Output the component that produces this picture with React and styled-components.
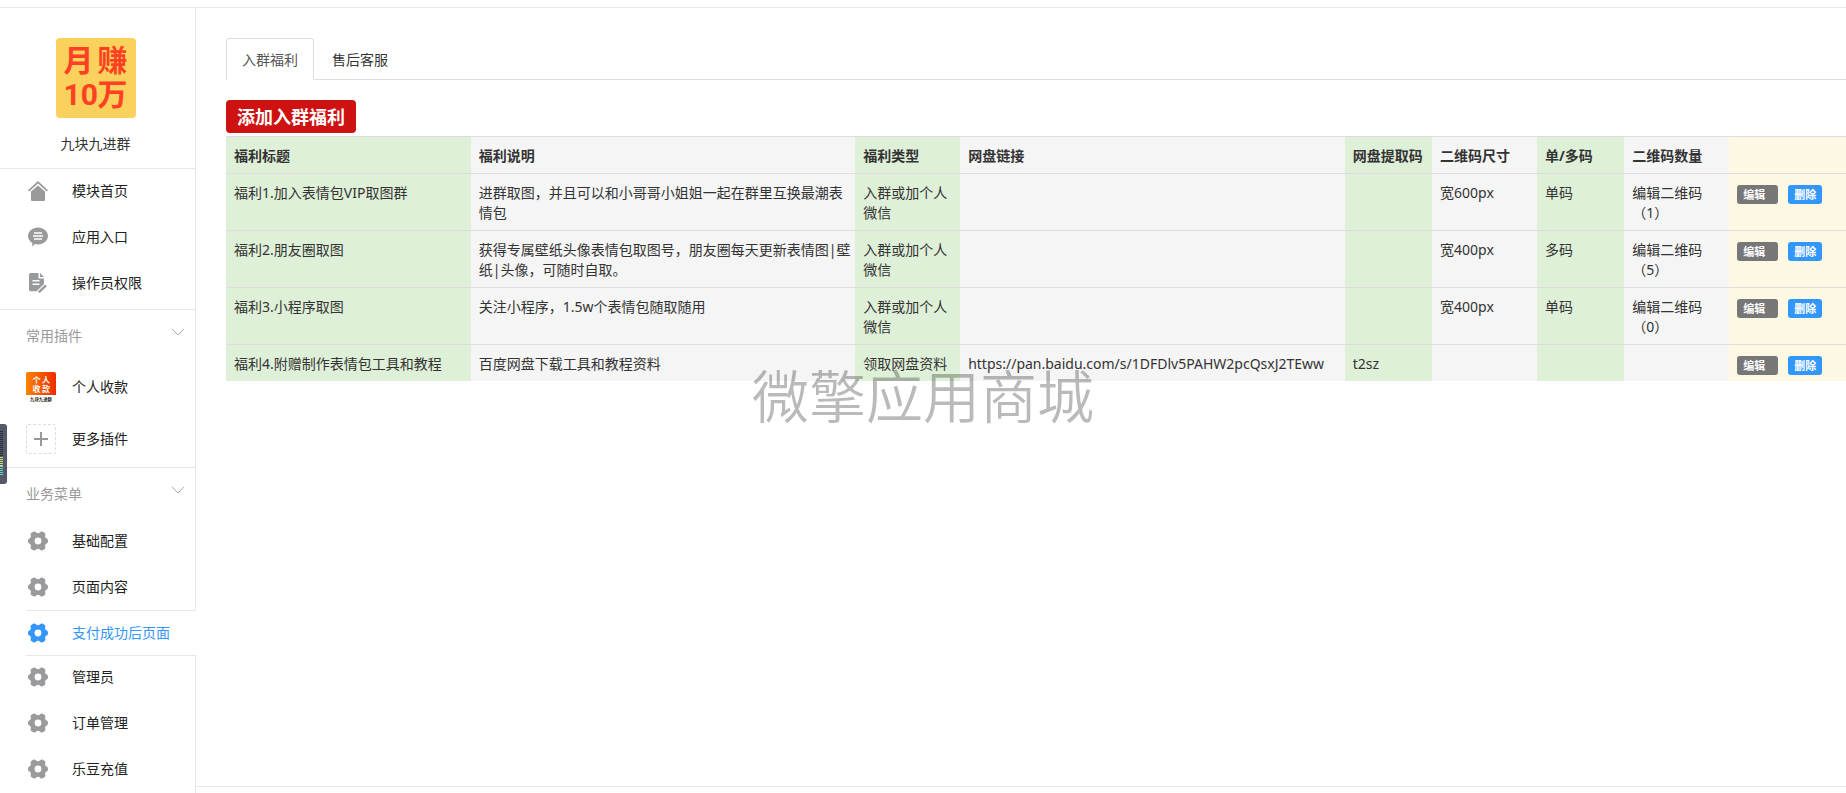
import React, { useState } from 'react'
import styled, { createGlobalStyle, css } from 'styled-components'

const GlobalStyle = createGlobalStyle`
    * {
        box-sizing: border-box;
    }
    body {
        margin: 0;
        background: #fff;
        color: #333;
        font-family: 'Noto Sans', 'Noto Sans CJK SC', sans-serif;
        font-size: 14px;
        line-height: 20px;
        overflow: hidden;
    }
    a {
        color: inherit;
        text-decoration: none;
    }
`

const Page = styled.div`
    display: flex;
    min-height: calc(100vh - 7px);
    margin-top: 7px;
    border-top: 1px solid #e7e8eb;
`

const Sidebar = styled.aside`
    flex: none;
    width: 196px;
    border-right: 1px solid #e7e7eb;
`

const AppInfo = styled.div`
    display: flex;
    flex-direction: column;
    align-items: center;
    gap: 16px;
    padding: 30px 0 14px;
    margin-left: -4px;
`

const AppLogo = styled.div`
    display: grid;
    grid-template-columns: 30px 30px;
    justify-content: center;
    align-content: center;
    column-gap: 4px;
    width: 80px;
    height: 80px;
    border-radius: 4px;
    background: #f9d15c;
    color: #ff4023;
    font-family: Roboto, 'Noto Sans CJK SC', sans-serif;
    font-size: 30px;
    font-weight: 700;
    line-height: 34px;
    text-align: center;
`

const MenuGroup = styled.nav`
    border-top: 1px solid #e7e7eb;
    padding-bottom: ${(props) => props.$bottom || 0}px;
`

const GroupTitle = styled.button`
    display: flex;
    justify-content: space-between;
    align-items: center;
    width: 100%;
    height: 51px;
    padding: 0 10px 0 26px;
    border: none;
    background: none;
    color: #999;
    font: inherit;
    cursor: pointer;

    svg {
        margin-bottom: 8px;
    }
`

const MenuItem = styled.a`
    display: flex;
    align-items: center;
    height: ${(props) => (props.$tall ? 52 : 46)}px;
    margin-left: 26px;
    padding-bottom: ${(props) => (props.$tall ? 0 : 2)}px;
    color: #222;

    ${(props) =>
        props.$active &&
        css`
            margin: -1px -1px -1px 26px;
            padding-bottom: 0;
            border: solid #e7e7eb;
            border-width: 1px 0;
            background: #fff;
            color: #3296fa;
        `}
`

const MenuIcon = styled.span`
    display: flex;
    width: 46px;
    padding-left: ${(props) => (props.$wide ? 0 : 2)}px;
    color: ${(props) => (props.$active ? '#3296fa' : '#999a9c')};
`

const AddBox = styled.span`
    display: flex;
    align-items: center;
    justify-content: center;
    width: 30px;
    height: 30px;
    border: 1px dashed #ddd;
    border-radius: 2px;
`

const Main = styled.main`
    display: flex;
    flex-direction: column;
    flex: 1;
    min-width: 0;
`

const Content = styled.div`
    flex: 1;
    padding: 30px 0 0 30px;
    overflow: hidden;
`

const Tabs = styled.div`
    display: flex;
    gap: 2px;
    border-bottom: 1px solid #ddd;
`

const Tab = styled.button`
    height: 42px;
    margin-bottom: -1px;
    padding: 2px 15px 0;
    border: 1px solid transparent;
    border-radius: 4px 4px 0 0;
    background: none;
    color: #333;
    font: inherit;
    cursor: pointer;

    ${(props) =>
        props.$active &&
        css`
            border-color: #ddd #ddd #fff;
            background: #fff;
            color: #555;
        `}
`

const AddButton = styled.button`
    display: block;
    height: 33px;
    margin: 20px 0 3px;
    padding: 0 11px;
    border: none;
    border-radius: 4px;
    background: #ce1111;
    color: #fff;
    font: inherit;
    font-size: 18px;
    font-weight: bold;
    cursor: pointer;
`

const Table = styled.table`
    width: calc(100% + 128px);
    table-layout: fixed;
    border-collapse: separate;
    border-spacing: 0;
`

const tones = { green: '#dff0d8', gray: '#f5f5f5', yellow: '#fcf8e3' }

const cell = css`
    padding: 9px 8px 7px;
    border-top: 1px solid #ddd;
    background: ${(props) => tones[props.$tone]};
    text-align: left;
    vertical-align: top;
`

const Th = styled.th`
    ${cell}
    height: 37px;
    font-weight: bold;
    white-space: nowrap;
`

const Td = styled.td`
    ${cell}
    white-space: ${(props) => (props.$pre ? 'pre' : 'normal')};
`

const RowActions = styled.div`
    display: flex;
    gap: 10px;
    padding-top: 2px;
    height: 20px;
`

const LabelButton = styled.button`
    flex: none;
    height: 19px;
    padding: 0 ${(props) => (props.$primary ? 6 : 13)}px 0 6px;
    border: none;
    border-radius: 3px;
    background: ${(props) => (props.$primary ? '#3296fa' : '#777')};
    color: #fff;
    font: inherit;
    font-size: 11px;
    font-weight: bold;
    line-height: 18px;
    cursor: pointer;
`

const Footer = styled.footer`
    height: 7px;
    border-top: 1px solid #e7e7eb;
`

const Watermark = styled.div`
    position: absolute;
    top: 368px;
    left: 752px;
    color: rgba(0, 0, 0, 0.27);
    font-family: 'Noto Sans CJK SC', sans-serif;
    font-size: 57px;
    font-weight: 350;
    line-height: 50px;
    white-space: nowrap;
    pointer-events: none;
`

const Meter = styled.div`
    position: fixed;
    top: 424px;
    left: 0;
    width: 7px;
    height: 60px;
`

const HomeIcon = () => (
    <svg width="20" height="20" viewBox="0 0 20 20" fill="currentColor">
        <path d="M10 0 20 9.2 18.9 10.6 10 2.6 1.1 10.6 0 9.2Z" />
        <path d="M10 4.4 17 10.6V19a1 1 0 0 1-1 1H4a1 1 0 0 1-1-1V10.6Z" />
    </svg>
)

const ChatIcon = () => (
    <svg width="20" height="20" viewBox="0 0 20 20">
        <path
            fill="currentColor"
            d="M10 .5c5.500 0 10 3.700 10 8.500s-4.500 8.500-10 8.500c-1.200 0-2.200-.1-3.200-.4L4.300 19.800V16C1.700 14.500 0 12 0 9 0 4.200 4.500.5 10 .5Z"
        />
        <path stroke="#fff" strokeWidth="1.300" d="M6 6h8M5 9h10M6 12h8" />
    </svg>
)

const FileIcon = () => (
    <svg width="20" height="20" viewBox="0 0 20 20">
        <path
            fill="currentColor"
            d="M2.500 0H10.500v5.500H16V11L8.700 18.300H2.500A1.500 1.500 0 0 1 1 16.800V1.500A1.500 1.500 0 0 1 2.500 0ZM12 0 16 4H12Z"
        />
        <path stroke="#fff" strokeWidth="1.400" d="M4.500 7.700h7M4.500 11.200h7" />
        <path
            stroke="currentColor"
            strokeWidth="2.400"
            d="M10.800 19.300 18 12.300"
        />
    </svg>
)

const GearIcon = () => (
    <svg width="20" height="20" viewBox="0 0 20 20" fill="currentColor">
        <path
            fillRule="evenodd"
            d="M5.300.8c1-.6 2-.3 2.600.5.600.7 1.300 1 2.100 1s1.500-.3 2.100-1c.6-.8 1.600-1.100 2.600-.5l1.700 1c1 .6 1.200 1.600.9 2.500-.4 1-.2 1.700.2 2.300.4.700 1 1 1.500 1.200.7.300 1 1 1 2.200s-.3 1.900-1 2.200c-.5.2-1.100.5-1.500 1.200-.4.600-.6 1.300-.2 2.300.3.900.1 1.900-.9 2.500l-1.700 1c-1 .6-2 .3-2.600-.5-.6-.7-1.300-1-2.100-1s-1.500.3-2.100 1c-.6.8-1.600 1.100-2.600.5l-1.700-1c-1-.6-1.200-1.600-.9-2.500.4-1 .2-1.700-.2-2.300-.4-.7-1-1-1.500-1.200C.3 11.900 0 11.200 0 10s.3-1.900 1-2.200c.5-.2 1.100-.5 1.500-1.200.4-.6.6-1.300.2-2.300-.3-.9-.1-1.900.9-2.500ZM10 6.600a3.400 3.400 0 1 0 0 6.800 3.400 3.400 0 0 0 0-6.800Z"
        />
    </svg>
)

const ChevronIcon = () => (
    <svg width="14" height="8" viewBox="0 0 14 8" fill="none">
        <path stroke="#aaa" d="M1 .8 7 7 13 .8" />
    </svg>
)

const PluginIcon = () => (
    <svg width="30" height="30" viewBox="0 0 30 30" textAnchor="middle">
        <defs>
            <linearGradient id="plugin">
                <stop offset="0" stopColor="#fb8200" />
                <stop offset="1" stopColor="#ee2c00" />
            </linearGradient>
        </defs>
        <path
            fill="url(#plugin)"
            d="M2 0H28a2 2 0 0 1 2 2V23H0V2a2 2 0 0 1 2-2Z"
        />
        <g fill="#fff" fontSize="8" fontWeight="bold">
            <text x="10.500" y="10.500">个</text>
            <text x="20" y="10.500">人</text>
            <text x="10.500" y="19.500">收</text>
            <text x="20" y="19.500">款</text>
        </g>
        <text x="15" y="28.500" fill="#222" fontSize="4.400" fontWeight="bold">
            九块九进群
        </text>
    </svg>
)

const PlusIcon = () => (
    <svg width="14" height="14" viewBox="0 0 14 14">
        <path stroke="#999" strokeWidth="2" d="M7 0V14M0 7H14" />
    </svg>
)

const LevelMeter = () => (
    <Meter>
        <svg width="7" height="60" viewBox="0 0 7 60">
            <path fill="#555869" d="M0 0H4a3 3 0 0 1 3 3V57a3 3 0 0 1-3 3H0Z" />
            <path
                stroke="#2b2d38"
                strokeWidth="3"
                strokeDasharray="1 1"
                d="M1.500 7V33"
            />
            <path
                stroke="#c5e86c"
                strokeWidth="3"
                strokeDasharray="1 1"
                d="M1.500 33V42"
            />
            <path
                stroke="#63d6c0"
                strokeWidth="3"
                strokeDasharray="1 1"
                d="M1.500 42V52"
            />
        </svg>
    </Meter>
)

const mainMenu = [
    { name: '模块首页', icon: <HomeIcon /> },
    { name: '应用入口', icon: <ChatIcon /> },
    { name: '操作员权限', icon: <FileIcon /> },
]

const businessMenu = [
    '基础配置',
    '页面内容',
    '支付成功后页面',
    '管理员',
    '订单管理',
    '乐豆充值',
]

const columns = [
    { key: 'title', name: '福利标题', width: '14%', tone: 'green' },
    { key: 'desc', name: '福利说明', width: '22%', tone: 'gray', pre: true },
    { key: 'type', name: '福利类型', width: '6%', tone: 'green' },
    { key: 'link', name: '网盘链接', width: '22%', tone: 'gray', pre: true },
    { key: 'code', name: '网盘提取码', width: '5%', tone: 'green' },
    { key: 'size', name: '二维码尺寸', width: '6%', tone: 'gray' },
    { key: 'mode', name: '单/多码', width: '5%', tone: 'green' },
    { key: 'count', name: '二维码数量', width: '6%', tone: 'gray' },
]

const rows = [
    {
        id: 1,
        title: '福利1.加入表情包VIP取图群',
        desc: '进群取图，并且可以和小哥哥小姐姐一起在群里互换最潮表\n情包',
        type: '入群或加个人微信',
        size: '宽600px',
        mode: '单码',
        count: <a href="#qrcode">编辑二维码（1）</a>,
    },
    {
        id: 2,
        title: '福利2.朋友圈取图',
        desc: '获得专属壁纸头像表情包取图号，朋友圈每天更新表情图|壁\n纸|头像，可随时自取。',
        type: '入群或加个人微信',
        size: '宽400px',
        mode: '多码',
        count: <a href="#qrcode">编辑二维码（5）</a>,
    },
    {
        id: 3,
        title: '福利3.小程序取图',
        desc: '关注小程序，1.5w个表情包随取随用',
        type: '入群或加个人微信',
        size: '宽400px',
        mode: '单码',
        count: <a href="#qrcode">编辑二维码（0）</a>,
    },
    {
        id: 4,
        title: '福利4.附赠制作表情包工具和教程',
        desc: '百度网盘下载工具和教程资料',
        type: '领取网盘资料',
        link: 'https://pan.baidu.com/s/1DFDlv5PAHW2pcQsxJ2TEww',
        code: 't2sz',
    },
]

function SideMenu() {
    const [current, setCurrent] = useState('支付成功后页面')

    return (
        <Sidebar>
            <AppInfo>
                <AppLogo>
                    <span>月</span>
                    <span>赚</span>
                    <span>10</span>
                    <span>万</span>
                </AppLogo>
                <span>九块九进群</span>
            </AppInfo>
            <MenuGroup $bottom={2}>
                {mainMenu.map((item) => (
                    <MenuItem key={item.name} href="#menu">
                        <MenuIcon>{item.icon}</MenuIcon>
                        {item.name}
                    </MenuItem>
                ))}
            </MenuGroup>
            <MenuGroup $bottom={2}>
                <GroupTitle>
                    常用插件
                    <ChevronIcon />
                </GroupTitle>
                <MenuItem href="#plugin" $tall>
                    <MenuIcon $wide>
                        <PluginIcon />
                    </MenuIcon>
                    个人收款
                </MenuItem>
                <MenuItem href="#more" $tall>
                    <MenuIcon $wide>
                        <AddBox>
                            <PlusIcon />
                        </AddBox>
                    </MenuIcon>
                    更多插件
                </MenuItem>
            </MenuGroup>
            <MenuGroup>
                <GroupTitle>
                    业务菜单
                    <ChevronIcon />
                </GroupTitle>
                {businessMenu.map((name) => (
                    <MenuItem
                        key={name}
                        href="#menu"
                        $active={name === current}
                        onClick={() => setCurrent(name)}
                    >
                        <MenuIcon $active={name === current}>
                            <GearIcon />
                        </MenuIcon>
                        {name}
                    </MenuItem>
                ))}
            </MenuGroup>
        </Sidebar>
    )
}

function BenefitTable() {
    return (
        <Table>
            <colgroup>
                {columns.map((col) => (
                    <col key={col.key} width={col.width} />
                ))}
                <col width="14%" />
            </colgroup>
            <thead>
                <tr>
                    {columns.map((col) => (
                        <Th key={col.key} $tone={col.tone}>
                            {col.name}
                        </Th>
                    ))}
                    <Th $tone="yellow" />
                </tr>
            </thead>
            <tbody>
                {rows.map((row) => (
                    <tr key={row.id}>
                        {columns.map((col) => (
                            <Td key={col.key} $tone={col.tone} $pre={col.pre}>
                                {row[col.key]}
                            </Td>
                        ))}
                        <Td $tone="yellow">
                            <RowActions>
                                <LabelButton>编辑</LabelButton>
                                <LabelButton $primary>删除</LabelButton>
                            </RowActions>
                        </Td>
                    </tr>
                ))}
            </tbody>
        </Table>
    )
}

function App() {
    const [tab, setTab] = useState('入群福利')

    return (
        <>
            <GlobalStyle />
            <Page>
                <SideMenu />
                <Main>
                    <Content>
                        <Tabs>
                            {['入群福利', '售后客服'].map((name) => (
                                <Tab
                                    key={name}
                                    $active={name === tab}
                                    onClick={() => setTab(name)}
                                >
                                    {name}
                                </Tab>
                            ))}
                        </Tabs>
                        <AddButton>添加入群福利</AddButton>
                        <BenefitTable />
                    </Content>
                    <Footer />
                </Main>
            </Page>
            <Watermark>微擎应用商城</Watermark>
            <LevelMeter />
        </>
    )
}

export default App
